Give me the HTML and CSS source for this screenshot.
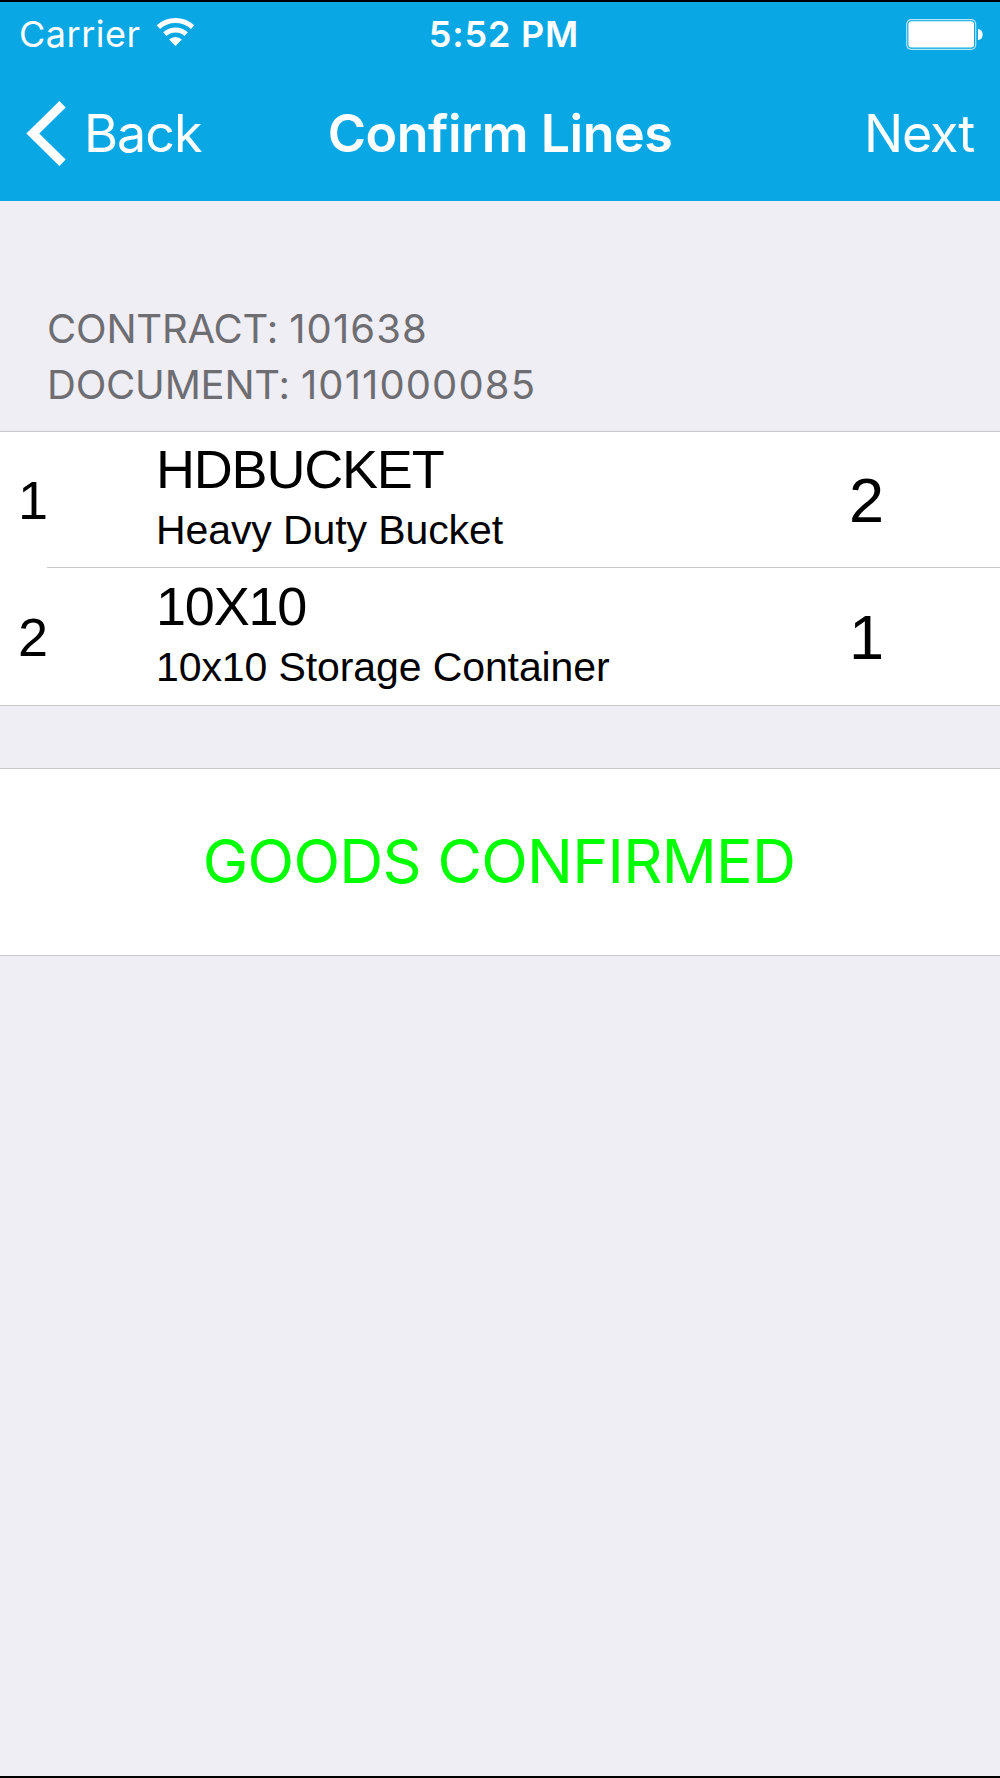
FILE: index.html
```html
<!DOCTYPE html>
<html lang="en">
<head>
    <meta charset="UTF-8">
    <meta name="viewport" content="width=device-width, initial-scale=1.0">
    <title>Confirm Lines</title>
    <link rel="stylesheet" href="styles.css">
</head>
<body>
    <header class="header">
        <div class="status-bar">
            <div class="carrier">
                <span>Carrier</span>
                <svg class="wifi" width="39" height="30" viewBox="0 0 39 30">
                    <path d="M2.4 10.1 A25.5 25.5 0 0 1 36.6 10.1" fill="none" stroke="#fff" stroke-width="5"/>
                    <path d="M8.8 17.1 A16 16 0 0 1 30.2 17.1" fill="none" stroke="#fff" stroke-width="4.8"/>
                    <path d="M13.2 22.6 A9 9 0 0 1 25.8 22.6 L19.5 29 Z" fill="#fff"/>
                </svg>
            </div>
            <span class="time">5:52 PM</span>
            <svg class="battery" width="77" height="31" viewBox="0 0 77 31">
                <rect x="0.7" y="0.7" width="69" height="29.6" rx="4.5" fill="none" stroke="#fff" stroke-opacity="0.7" stroke-width="1.2"/>
                <rect x="2.4" y="2.2" width="65.6" height="26.2" rx="3" fill="#fff"/>
                <path d="M72 10 Q76.6 10.5 76.6 15.5 Q76.6 20.5 72 21 Z" fill="#fff"/>
            </svg>
        </div>
        <nav class="nav-bar">
            <a class="back" href="#">
                <svg width="40" height="65" viewBox="0 0 40 65">
                    <path d="M36.5 3.2 L6.8 32.5 L36.5 61.8" fill="none" stroke="#fff" stroke-width="9"/>
                </svg>
                <span>Back</span>
            </a>
            <h1>Confirm Lines</h1>
            <a class="next" href="#">Next</a>
        </nav>
    </header>

    <div class="section-header">
        <p>CONTRACT: <span>101638</span></p>
        <p>DOCUMENT: <span>1011000085</span></p>
    </div>

    <ul class="lines">
        <li class="line">
            <span class="number">1</span>
            <div class="item">
                <h2>HDBUCKET</h2>
                <p>Heavy Duty Bucket</p>
            </div>
            <span class="quantity">2</span>
        </li>
        <li class="line">
            <span class="number">2</span>
            <div class="item">
                <h2>10X10</h2>
                <p>10x10 Storage Container</p>
            </div>
            <span class="quantity">1</span>
        </li>
    </ul>

    <div class="status">GOODS CONFIRMED</div>
</body>
</html>
```
FILE: styles.css
```css
* {
    box-sizing: border-box;
}

body {
    margin: 0;
    height: 1778px;
    overflow: hidden;
    background: #efeef4;
    font-family: Inter, "Liberation Sans", sans-serif;
    color: #000;
    border-top: 2px solid #000;
    border-bottom: 2px solid #000;
}

h1, h2, p, ul {
    margin: 0;
    padding: 0;
    font-weight: 400;
}

a {
    color: inherit;
    text-decoration: none;
}

.header {
    height: 199px;
    background: #09a7e4;
    color: #fff;
}

/* Status bar */
.status-bar {
    display: grid;
    grid-template-columns: 1fr auto 1fr;
    align-items: center;
    height: 64px;
    padding: 0 17px 0 19px;
    font-size: 36px;
}

.carrier {
    display: flex;
    align-items: center;
    gap: 15px;
    letter-spacing: 0.5px;
}

.wifi {
    margin-top: -4px;
}

.time {
    padding-left: 6px;
    font-weight: 600;
    letter-spacing: 0.8px;
}

.battery {
    justify-self: end;
}

/* Navigation bar */
.nav-bar {
    display: grid;
    grid-template-columns: 1fr auto 1fr;
    align-items: center;
    height: 134px;
    padding: 0 26px;
    font-size: 52px;
}

.back {
    display: flex;
    align-items: center;
    gap: 18px;
    letter-spacing: -1px;
}

.nav-bar h1 {
    font-size: 52px;
    font-weight: 600;
    letter-spacing: -0.5px;
}

.next {
    justify-self: end;
    letter-spacing: -1.2px;
}

/* Contract and document numbers */
.section-header {
    height: 230px;
    padding: 100px 47px 0;
    font-size: 40px;
    line-height: 56px;
    letter-spacing: -0.2px;
    color: #6d6d72;
}

.section-header span {
    letter-spacing: 1.1px;
}

.lines {
    list-style: none;
    background: #fff;
    border-top: 1px solid #c8c7cc;
    border-bottom: 1px solid #c8c7cc;
    font-family: "Liberation Sans", Arial, sans-serif;
}

.line {
    display: grid;
    grid-template-columns: 156px 1fr 151px;
    align-items: center;
    height: 135px;
}

/* The separator is inset from the left edge */
.line + .line {
    height: 138px;
    padding-top: 1px;
    background: linear-gradient(#c8c7cc, #c8c7cc) 47px 0 / 100% 1px no-repeat;
}

.number {
    padding-left: 18px;
    font-size: 54px;
}

.item h2 {
    font-size: 54px;
    line-height: 62px;
    letter-spacing: -1.2px;
}

.item p {
    font-size: 41px;
    line-height: 61px;
    letter-spacing: -0.1px;
}

.quantity {
    font-size: 63px;
}

.status {
    display: flex;
    align-items: center;
    justify-content: center;
    height: 188px;
    margin-top: 62px;
    padding: 0 2px 2px 0;
    background: #fff;
    border-top: 1px solid #c8c7cc;
    border-bottom: 1px solid #c8c7cc;
    font-size: 61px;
    letter-spacing: -0.75px;
    color: #00ff00;
}
```
